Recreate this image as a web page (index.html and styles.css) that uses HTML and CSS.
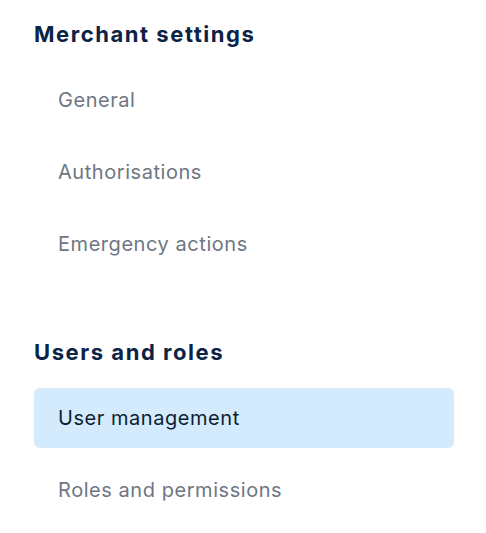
FILE: index.html
```html
<!DOCTYPE html>
<html>
<head>
<meta charset="utf-8">
<link rel="stylesheet" href="styles.css">
</head>
<body>
<nav class="settings-nav">
  <section class="nav-section">
    <h2 class="nav-heading">Merchant settings</h2>
    <ul class="nav-list">
      <li class="nav-item">General</li>
      <li class="nav-item">Authorisations</li>
      <li class="nav-item">Emergency actions</li>
    </ul>
  </section>
  <section class="nav-section">
    <h2 class="nav-heading">Users and roles</h2>
    <ul class="nav-list">
      <li class="nav-item active">User management</li>
      <li class="nav-item">Roles and permissions</li>
    </ul>
  </section>
</nav>
</body>
</html>
```
FILE: styles.css
```css
html, body {
  margin: 0;
  padding: 0;
  background: #ffffff;
}
body {
  font-family: Inter, "Noto Sans", sans-serif;
}
.settings-nav {
  width: 420px;
  padding: 20px 0 0 34px;
  display: flex;
  flex-direction: column;
  gap: 64px;
}
.nav-heading {
  margin: 0 0 22px 0;
  font-size: 22px;
  line-height: 28px;
  font-weight: 700;
  letter-spacing: 1.55px;
  color: #0b2346;
}
.nav-list {
  list-style: none;
  margin: 0;
  padding: 0;
  display: flex;
  flex-direction: column;
  gap: 12px;
}
.nav-item {
  height: 60px;
  display: flex;
  align-items: center;
  padding-left: 24px;
  font-size: 20px;
  letter-spacing: 0.55px;
  color: #6e7683;
  border-radius: 6px;
}
.nav-item.active {
  background: #d3ebfc;
  color: #0e1d33;
}
```
